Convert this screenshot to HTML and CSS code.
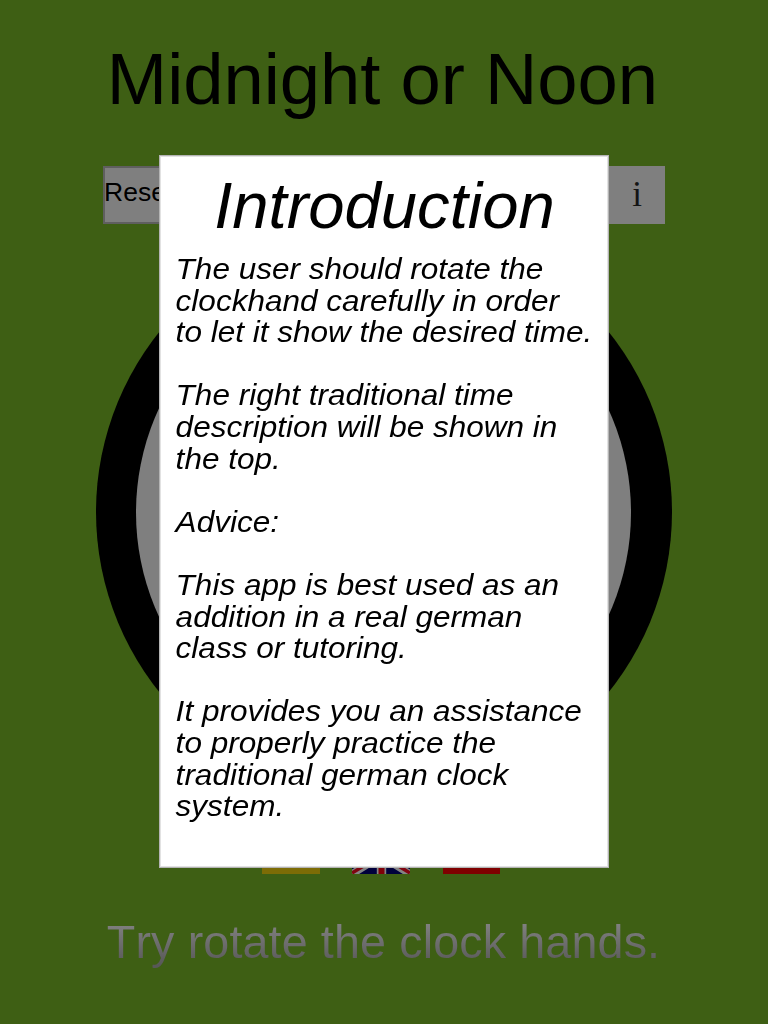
FILE: index.html
```html
<!DOCTYPE html>
<html lang="en">
<head>
<meta charset="utf-8">
<title>Midnight or Noon</title>
<link rel="stylesheet" href="styles.css">
</head>
<body>
<div class="app">
  <h1 class="title">Midnight or Noon</h1>
  <div class="toolbar">
    <button class="btn btn-reset">Reset</button>
    <button class="btn btn-info">i</button>
  </div>
  <div class="clock"><div class="face"></div></div>
  <div class="flags">
    <svg class="flag" viewBox="0 0 58 36"><path fill="#000" d="M0 0h58v12H0z"/><path fill="#7f0000" d="M0 12h58v12H0z"/><path fill="#7d6c06" d="M0 24h58v12H0z"/></svg>
    <svg class="flag flag-uk" viewBox="0 0 58 36"><path fill="#00003c" d="M0 0h58v36H0z"/><path stroke="#858585" stroke-width="7.500" d="M0 0l58 36M58 0L0 36"/><path stroke="#7f0510" stroke-width="3.500" d="M0 35L28 18M58 35L30 18M0 1l28 17M58 1L30 18"/><path stroke="#858585" stroke-width="9.400" d="M29.500 0v36M0 18h58"/><path stroke="#7f0008" stroke-width="6" d="M29.500 0v36M0 18h58"/></svg>
    <svg class="flag" viewBox="0 0 57 36"><path fill="#7f0000" d="M0 0h57v36H0z"/></svg>
  </div>
  <p class="hint">Try rotate the clock hands.</p>
  <section class="dialog">
    <h2 class="heading">Introduction</h2>
    <p class="copy">The user should rotate the<br>clockhand carefully in order<br>to let it show the desired time.</p>
    <p class="copy">The right traditional time<br>description will be shown in<br>the top.</p>
    <p class="copy">Advice:</p>
    <p class="copy">This app is best used as an<br>addition in a real german<br>class or tutoring.</p>
    <p class="copy">It provides you an assistance<br>to properly practice the<br>traditional german clock<br>system.</p>
  </section>
</div>
</body>
</html>
```
FILE: styles.css
```css
* { box-sizing: border-box; margin: 0; padding: 0; }
body { background: #3e5f14; font-family: "Liberation Sans", Arial, sans-serif; color: #000; }
.app { position: relative; width: 768px; height: 1024px; overflow: hidden; display: flex; flex-direction: column; align-items: center; }
.title { margin: 38px 3px 0 0; height: 128px; font-size: 72.4px; line-height: 82px; font-weight: 400; white-space: nowrap; }
.toolbar { width: 562px; height: 58px; display: flex; justify-content: space-between; }
.btn { height: 58px; border: 0; background: #7f7f7f; color: #000; }
.btn-reset { width: 112px; border: 2px solid #5f5f5f; padding: 0 0 5px; text-align: left; text-indent: -1px; font: 26.500px "Liberation Sans", Arial, sans-serif; }
.btn-info { width: 57px; padding-left: 1px; font: 35px "Liberation Serif", serif; color: #141414; }
.clock { width: 576px; height: 576px; border-radius: 50%; background: #000; display: flex; align-items: center; justify-content: center; }
.face { width: 495px; height: 495px; border-radius: 50%; background: #7f7f7f; margin-right: 1px; }
.flags { width: 238px; margin: 38px 6px 0 0; display: flex; justify-content: space-between; }
.flag { display: block; height: 36px; }
.flag-uk { margin-right: 1px; }
.hint { margin: 41px 1px 0 0; font-size: 46.700px; line-height: 54px; font-kerning: none; letter-spacing: .12px; white-space: nowrap; color: transparent; background: linear-gradient(#7f7f7f 10px, #585858 50px); -webkit-background-clip: text; background-clip: text; }
.dialog { position: absolute; left: 159px; top: 155px; width: 450px; height: 713px; padding: 13px 15px; background: #fff; border: 1px solid #b4b4b4; box-shadow: inset 0 0 0 1px #e2e2e2; font-style: italic; }
.heading { font-size: 65.200px; line-height: 74px; font-weight: 400; text-align: center; margin: 0 -1px 10px 0; }
.copy { font-size: 30px; line-height: 31.600px; margin-bottom: 31.600px; white-space: nowrap; padding-left: .6px; transform: scaleX(1.05); transform-origin: 0 0; }
```
